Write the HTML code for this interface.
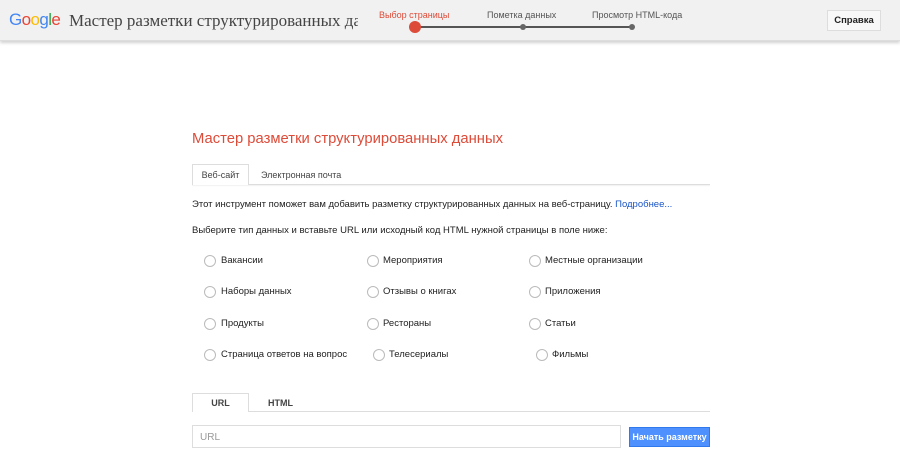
<!DOCTYPE html>
<html><head><meta charset="utf-8"><style>
*{margin:0;padding:0;box-sizing:border-box}
body{width:900px;height:476px;background:#fff;font-family:"Liberation Sans",Arial,sans-serif;position:relative;overflow:hidden;color:#222}
.hdr{position:absolute;left:0;top:0;width:900px;height:41px;background:#f1f1f1;box-shadow:0 2px 3px rgba(0,0,0,.18);border-bottom:1px solid #ddd}
.a{position:absolute;white-space:nowrap}
.g{font-size:17px;letter-spacing:-0.6px;top:10px;left:9px;font-family:"Liberation Sans",sans-serif}
.ttl{left:69px;top:11px;font-family:"Liberation Serif",serif;font-size:17px;color:#444;width:289px;overflow:hidden}
.st{font-size:9px;top:10px;color:#555}
.dot{position:absolute;width:6px;height:6px;border-radius:50%;background:#666;top:24px}
.sm{font-size:9.5px}
.r{position:absolute;width:12px;height:12px;border:1px solid #bbb;border-radius:50%;background:#fff}
.lab{font-size:9.5px;color:#222}
</style></head><body>
<div class="hdr">
<div class="a g"><span style="color:#4285f4">G</span><span style="color:#ea4335">o</span><span style="color:#fbbc05">o</span><span style="color:#4285f4">g</span><span style="color:#34a853">l</span><span style="color:#ea4335">e</span></div>
<div class="a ttl">Мастер разметки структурированных данных</div>
<div class="a st" style="left:379px;color:#dd4b39">Выбор страницы</div>
<div class="a st" style="left:487px">Пометка данных</div>
<div class="a st" style="left:592px">Просмотр HTML-кода</div>
<div style="position:absolute;left:415px;top:26px;width:218px;height:2px;background:#555"></div>
<div style="position:absolute;left:409px;top:21px;width:12px;height:12px;border-radius:50%;background:#dd4b39"></div>
<div class="dot" style="left:520px"></div>
<div class="dot" style="left:629px"></div>
<div style="position:absolute;left:827px;top:10px;width:54px;height:21px;border:1px solid #ddd;background:#f8f8f8;font-size:9.5px;font-weight:bold;text-align:center;line-height:19px;color:#222">Справка</div>
</div>
<div class="a" style="left:192px;top:131px;font-size:14.8px;color:#dd4b39">Мастер разметки структурированных данных</div>
<div style="position:absolute;left:192px;top:184px;width:518px;height:1px;background:#ddd;box-shadow:0 1px 1px #eee"></div>
<div style="position:absolute;left:192px;top:164px;width:57px;height:21px;border:1px solid #ddd;border-bottom:none;background:#fff;font-size:9px;text-align:center;line-height:20px;color:#444">Веб-сайт</div>
<div class="a" style="left:261px;top:170px;font-size:9px;color:#444">Электронная почта</div>
<div class="a sm" style="left:192px;top:199px">Этот инструмент поможет вам добавить разметку структурированных данных на веб-страницу. <span style="color:#1a55c8">Подробнее...</span></div>
<div class="a sm" style="left:192px;top:225px">Выберите тип данных и вставьте URL или исходный код HTML нужной страницы в поле ниже:</div>

<div class="r" style="left:204px;top:255px"></div><div class="a lab" style="left:221px;top:255px">Вакансии</div>
<div class="r" style="left:367px;top:255px"></div><div class="a lab" style="left:383px;top:255px">Мероприятия</div>
<div class="r" style="left:529px;top:255px"></div><div class="a lab" style="left:545px;top:255px">Местные организации</div>
<div class="r" style="left:204px;top:286px"></div><div class="a lab" style="left:221px;top:286px">Наборы данных</div>
<div class="r" style="left:367px;top:286px"></div><div class="a lab" style="left:383px;top:286px">Отзывы о книгах</div>
<div class="r" style="left:529px;top:286px"></div><div class="a lab" style="left:545px;top:286px">Приложения</div>
<div class="r" style="left:204px;top:318px"></div><div class="a lab" style="left:221px;top:318px">Продукты</div>
<div class="r" style="left:367px;top:318px"></div><div class="a lab" style="left:383px;top:318px">Рестораны</div>
<div class="r" style="left:529px;top:318px"></div><div class="a lab" style="left:545px;top:318px">Статьи</div>
<div class="r" style="left:204px;top:349px"></div><div class="a lab" style="left:221px;top:349px">Страница ответов на вопрос</div>
<div class="r" style="left:373px;top:349px"></div><div class="a lab" style="left:389px;top:349px">Телесериалы</div>
<div class="r" style="left:536px;top:349px"></div><div class="a lab" style="left:552px;top:349px">Фильмы</div>

<div style="position:absolute;left:192px;top:411px;width:518px;height:1px;background:#ddd"></div>
<div style="position:absolute;left:192px;top:393px;width:57px;height:19px;border:1px solid #ddd;border-bottom:none;background:#fff;font-size:9px;font-weight:bold;text-align:center;line-height:18px;color:#444">URL</div>
<div class="a" style="left:268px;top:398px;font-size:9px;font-weight:bold;color:#444">HTML</div>
<div style="position:absolute;left:192px;top:425px;width:429px;height:23px;border:1px solid #ddd;font-size:10px;color:#999;padding:6px 7px">URL</div>
<div style="position:absolute;left:629px;top:427px;width:81px;height:20px;background:#4d90fe;border:1px solid #3079ed;color:#fff;font-size:9px;font-weight:bold;text-align:center;line-height:18px">Начать разметку</div>
</body></html>
